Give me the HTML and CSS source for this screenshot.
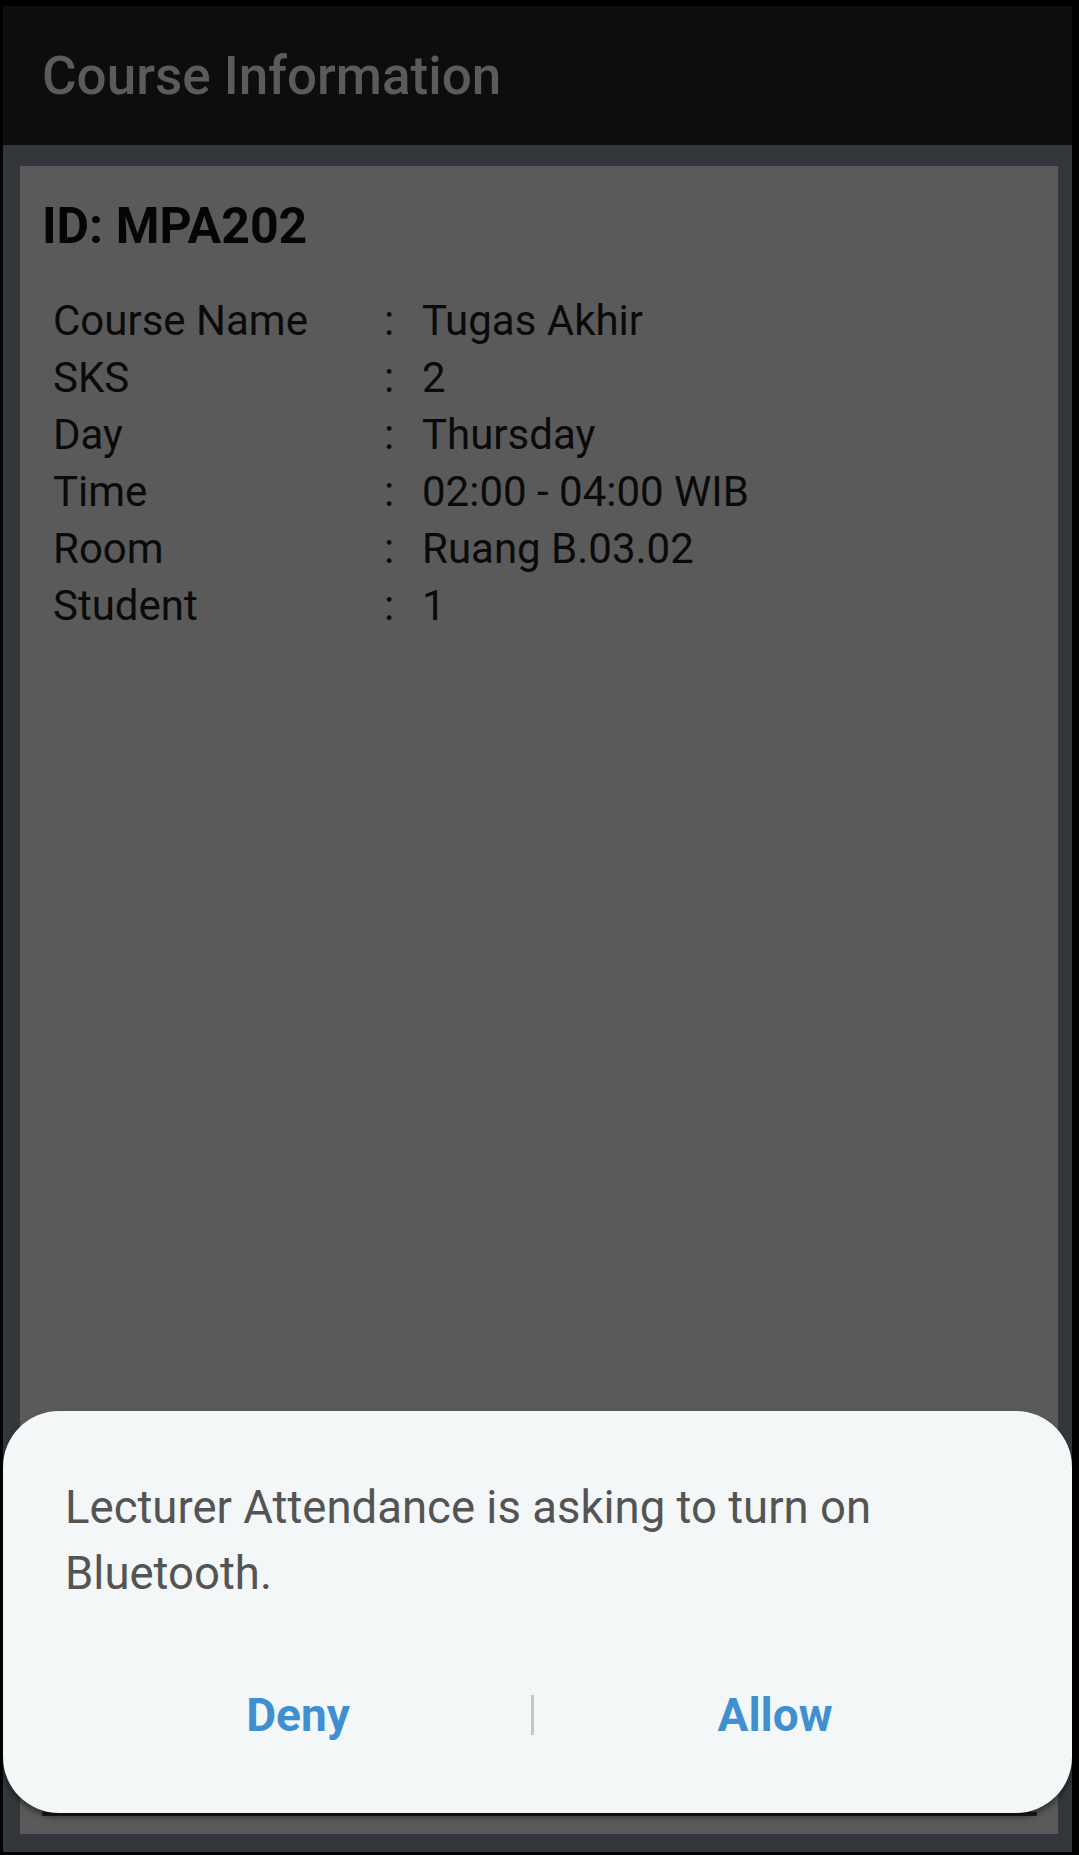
FILE: index.html
```html
<!DOCTYPE html>
<html lang="en">
<head>
<meta charset="utf-8">
<title>Course Information</title>
<link rel="stylesheet" href="styles.css">
</head>
<body>
<div class="screen">
  <header class="appbar">
    <h1 class="appbar-title">Course Information</h1>
  </header>
  <main class="content">
    <section class="card">
      <h2 class="course-id">ID: MPA202</h2>
      <dl class="info">
        <div class="row"><dt>Course Name</dt><dd><span class="colon">:</span><span class="val">Tugas Akhir</span></dd></div>
        <div class="row"><dt>SKS</dt><dd><span class="colon">:</span><span class="val">2</span></dd></div>
        <div class="row"><dt>Day</dt><dd><span class="colon">:</span><span class="val">Thursday</span></dd></div>
        <div class="row"><dt>Time</dt><dd><span class="colon">:</span><span class="val">02:00 - 04:00 WIB</span></dd></div>
        <div class="row"><dt>Room</dt><dd><span class="colon">:</span><span class="val">Ruang B.03.02</span></dd></div>
        <div class="row"><dt>Student</dt><dd><span class="colon">:</span><span class="val">1</span></dd></div>
      </dl>
      <div class="spacer"></div>
      <div class="bottom-bar"></div>
    </section>
  </main>
</div>
<div class="dialog" role="dialog">
  <p class="dialog-msg">Lecturer Attendance is asking to turn on Bluetooth.</p>
  <div class="dialog-actions">
    <button class="dialog-btn">Deny</button>
    <span class="dialog-divider"></span>
    <button class="dialog-btn">Allow</button>
  </div>
</div>
</body>
</html>
```
FILE: styles.css
```css
html, body {
  margin: 0;
  padding: 0;
  background: #000;
  height: 100%;
}
body {
  font-family: Roboto, "Noto Sans", "Liberation Sans", sans-serif;
  width: 1079px;
  height: 1855px;
  overflow: hidden;
  position: relative;
}
.screen {
  margin: 6px 7px 3px 3px;
  height: 1846px;
  display: flex;
  flex-direction: column;
  background: #33373b;
}
.appbar {
  height: 139px;
  background: #0d0d0d;
  display: flex;
  align-items: center;
  padding-left: 39px;
  flex: none;
}
.appbar-title {
  margin: 0;
  font-size: 53px;
  font-weight: 500;
  color: #5b5b5b;
  letter-spacing: 0;
}
.content {
  flex: 1;
  padding: 21px 14px 18px 17px;
  display: flex;
}
.card {
  flex: 1;
  background: #5a5a5a;
  display: flex;
  flex-direction: column;
  padding: 0 0 0 22px;
}
.course-id {
  margin: 30px 0 0 0;
  font-size: 50px;
  line-height: 60px;
  font-weight: 700;
  color: #050505;
}
.info {
  margin: 36px 0 0 11px;
}
.row {
  display: flex;
  height: 57px;
  align-items: center;
  font-size: 42px;
  color: #0a0a0a;
}
.row dt {
  width: 331px;
}
.row dd {
  margin: 0;
  display: flex;
}
.colon {
  width: 38px;
}
.spacer { flex: 1; }
.bottom-bar {
  height: 4px;
  margin: 0 21px 18px 0;
  background: #1a1a1a;
}
.dialog {
  position: absolute;
  left: 3px;
  top: 1411px;
  width: 1069px;
  height: 402px;
  box-sizing: border-box;
  background: #f3f7f8;
  border-radius: 56px;
  box-shadow: 0 4px 6px rgba(0,0,0,0.45);
  padding: 64px 56px 0 62px;
  display: flex;
  flex-direction: column;
}
.dialog-msg {
  margin: 0;
  font-size: 45.5px;
  line-height: 66px;
  color: #545454;
}
.dialog-actions {
  margin-top: 78px;
  display: grid;
  grid-template-columns: 466px 3px 1fr;
  align-items: center;
}
.dialog-btn {
  background: none;
  border: none;
  padding: 0;
  font-family: inherit;
  font-size: 46px;
  font-weight: 700;
  color: #4090cf;
  line-height: 60px;
  text-align: center;
}
.dialog-divider {
  width: 3px;
  height: 40px;
  background: #c4c6c8;
}
```
